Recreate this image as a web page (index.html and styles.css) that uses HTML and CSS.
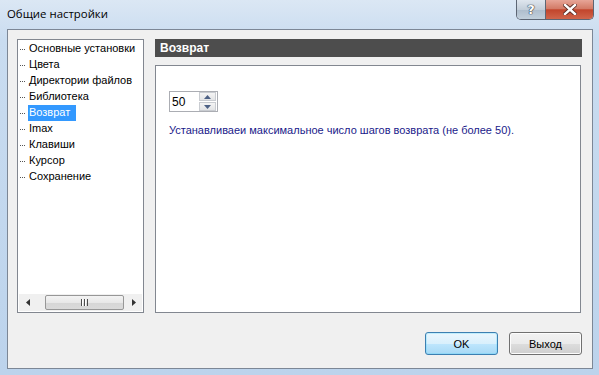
FILE: index.html
```html
<!DOCTYPE html>
<html>
<head>
    <title>Общие настройки</title>
    <link rel="stylesheet" href="styles.css">
</head>
<body>
    <div class="window">
        <div class="titlebar">
            <span class="title">Общие настройки</span>
            <div class="caption-btns">
                <div class="cap-btn help">?</div>
                <div class="cap-btn close">
                    <svg width="14" height="11" viewBox="0 0 14 11">
                        <path d="M2 1 L12 10 M12 1 L2 10" stroke="#5a2a22" stroke-width="4.2" stroke-linecap="square"/>
                        <path d="M2 1 L12 10 M12 1 L2 10" stroke="#ffffff" stroke-width="2.4" stroke-linecap="square"/>
                    </svg>
                </div>
            </div>
        </div>
        <div class="client">
            <div class="main">
                <div class="tree">
                    <ul class="tree-list">
                        <li><span class="dots"></span><span class="label">Основные установки</span></li>
                        <li><span class="dots"></span><span class="label">Цвета</span></li>
                        <li><span class="dots"></span><span class="label">Директории файлов</span></li>
                        <li><span class="dots"></span><span class="label">Библиотека</span></li>
                        <li><span class="dots"></span><span class="label selected">Возврат</span></li>
                        <li><span class="dots"></span><span class="label">Imax</span></li>
                        <li><span class="dots"></span><span class="label">Клавиши</span></li>
                        <li><span class="dots"></span><span class="label">Курсор</span></li>
                        <li><span class="dots"></span><span class="label">Сохранение</span></li>
                    </ul>
                    <div class="hscroll">
                        <div class="arrow">
                            <svg width="4" height="7" viewBox="0 0 4 7"><path d="M4 0 L0 3.5 L4 7 Z" fill="#333"/></svg>
                        </div>
                        <div class="track">
                            <div class="thumb"><span class="grip"></span></div>
                        </div>
                        <div class="arrow">
                            <svg width="4" height="7" viewBox="0 0 4 7"><path d="M0 0 L4 3.5 L0 7 Z" fill="#333"/></svg>
                        </div>
                    </div>
                </div>
                <div class="panel">
                    <div class="panel-header">Возврат</div>
                    <div class="panel-body">
                        <div class="spin">
                            <span class="spin-value">50</span>
                            <div class="spin-btns">
                                <div class="spin-btn">
                                    <svg width="7" height="4" viewBox="0 0 7 4"><path d="M0 4 L3.5 0 L7 4 Z" fill="#4d6185"/></svg>
                                </div>
                                <div class="spin-btn">
                                    <svg width="7" height="4" viewBox="0 0 7 4"><path d="M0 0 L3.5 4 L7 0 Z" fill="#4d6185"/></svg>
                                </div>
                            </div>
                        </div>
                        <p class="hint">Устанавливаеи максимальное число шагов возврата (не более 50).</p>
                    </div>
                </div>
            </div>
            <div class="buttons">
                <button class="btn default" type="button">OK</button>
                <button class="btn" type="button">Выход</button>
            </div>
        </div>
    </div>
</body>
</html>
```

FILE: styles.css
```css
html, body {
    margin: 0;
    padding: 0;
}
body {
    width: 599px;
    height: 375px;
    overflow: hidden;
    font-family: "Liberation Sans", Arial, sans-serif;
    font-size: 11px;
}
.window {
    width: 599px;
    height: 375px;
    box-sizing: border-box;
    display: flex;
    flex-direction: column;
    background: linear-gradient(180deg, #dbe7f4 0px, #c9dcf0 40px, #bcd3ec 100%);
    padding: 0 6px 6px 7px;
}
.titlebar {
    height: 29px;
    display: flex;
    align-items: flex-start;
}
.title {
    font-family: "Open Sans", "DejaVu Sans", sans-serif;
    font-size: 11.4px;
    color: #000;
    margin-top: 6px;
}
.caption-btns {
    margin-left: auto;
    margin-right: -1px;
    display: flex;
    height: 19px;
    border: 1px solid #5d6674;
    border-top: none;
    border-radius: 0 0 5px 5px;
    overflow: hidden;
}
.cap-btn {
    height: 19px;
    display: flex;
    align-items: center;
    justify-content: center;
}
.help {
    width: 28px;
    background: linear-gradient(180deg, #dfe6ee 0%, #c3ced9 50%, #aebdcc 51%, #c2d0dc 100%);
    border-right: 1px solid #5d6674;
    color: #fff;
    font-family: "DejaVu Sans", sans-serif;
    font-weight: bold;
    font-size: 13px;
    text-shadow: 0 0 1px #2c3440, 0 0 1px #2c3440, 0 0 1px #2c3440;
}
.close {
    width: 47px;
    background: linear-gradient(180deg, #e7a597 0%, #d37b67 45%, #c2452c 52%, #d0654b 100%);
}
.client {
    flex: 1;
    background: #f0f0f0;
    border: 1px solid #7c8796;
    display: flex;
    flex-direction: column;
    padding: 9px 10px 0 9px;
}
.main {
    display: flex;
    height: 274px;
}
.tree {
    width: 127px;
    box-sizing: border-box;
    border: 1px solid #828790;
    background: #fff;
    display: flex;
    flex-direction: column;
    overflow: hidden;
}
.tree-list {
    list-style: none;
    margin: 0;
    padding: 1px 0 0 1px;
    flex: 1;
}
.tree-list li {
    height: 16px;
    display: flex;
    align-items: center;
    white-space: nowrap;
}
.dots {
    flex-shrink: 0;
    width: 6px;
    height: 1px;
    margin-left: 1px;
    margin-right: 2px;
    background-image: linear-gradient(90deg, #555 1px, transparent 1px);
    background-size: 2px 1px;
}
.label {
    color: #000;
    padding: 1px 1px 2px 1px;
    line-height: 13px;
}
.label.selected {
    background: #3399ff;
    color: #fff;
    padding-right: 6px;
}
.hscroll {
    height: 17px;
    display: flex;
    align-items: center;
    background: #f0f0f0;
    margin: 0 1px 1px 1px;
}
.arrow {
    width: 17px;
    height: 17px;
    display: flex;
    align-items: center;
    justify-content: center;
}
.track {
    flex: 1;
    height: 15px;
    padding-left: 9px;
}
.thumb {
    width: 79px;
    height: 15px;
    box-sizing: border-box;
    border: 1px solid #979797;
    border-radius: 2px;
    background: linear-gradient(180deg, #f3f3f3 0%, #e8e8e8 50%, #d6d6d6 51%, #dadada 100%);
    display: flex;
    align-items: center;
    justify-content: center;
}
.grip {
    width: 7px;
    height: 7px;
    background-image: linear-gradient(90deg, #4d4d4d 1px, #fff 1px, #fff 2px, transparent 2px);
    background-size: 3px 7px;
}
.panel {
    flex: 1;
    margin-left: 11px;
    display: flex;
    flex-direction: column;
}
.panel-header {
    height: 18px;
    background: #4d4d4d;
    color: #fff;
    font-weight: bold;
    font-size: 12px;
    line-height: 18px;
    padding-left: 5px;
}
.panel-body {
    flex: 1;
    margin-top: 8px;
    margin-right: 1px;
    border: 1px solid #828790;
    background: #fff;
    padding: 25px 13px 0 13px;
}
.spin {
    width: 49px;
    height: 21px;
    box-sizing: border-box;
    border: 1px solid #abadb3;
    display: flex;
    align-items: center;
}
.spin-value {
    flex: 1;
    padding-left: 2px;
    font-size: 12px;
    color: #000;
}
.spin-btns {
    width: 17px;
    height: 19px;
    display: flex;
    flex-direction: column;
    gap: 1px;
    margin-right: 1px;
}
.spin-btn {
    flex: 1;
    box-sizing: border-box;
    border: 1px solid #c9ccd1;
    background: linear-gradient(180deg, #f4f4f4 0%, #e3e4e6 100%);
    display: flex;
    align-items: center;
    justify-content: center;
}
.hint {
    margin: 12px 0 0 0;
    color: #1a1a8a;
}
.buttons {
    display: flex;
    justify-content: flex-end;
    gap: 11px;
    margin-top: 19px;
}
.btn {
    width: 73px;
    height: 23px;
    font-family: "Liberation Sans", Arial, sans-serif;
    font-size: 11px;
    color: #000;
    border: 1px solid #707070;
    border-radius: 3px;
    background: linear-gradient(180deg, #f2f2f2 0%, #ebebeb 50%, #dddddd 51%, #cfcfcf 100%);
    box-shadow: inset 0 0 0 1px #fcfcfc;
    padding: 0;
}
.btn.default {
    border-color: #3c7fb1;
    background: linear-gradient(180deg, #eaf6fd 0%, #d9f0fc 50%, #bee6fd 51%, #a7d9f5 100%);
    box-shadow: inset 0 0 0 1px #48d2fb40;
}
```
